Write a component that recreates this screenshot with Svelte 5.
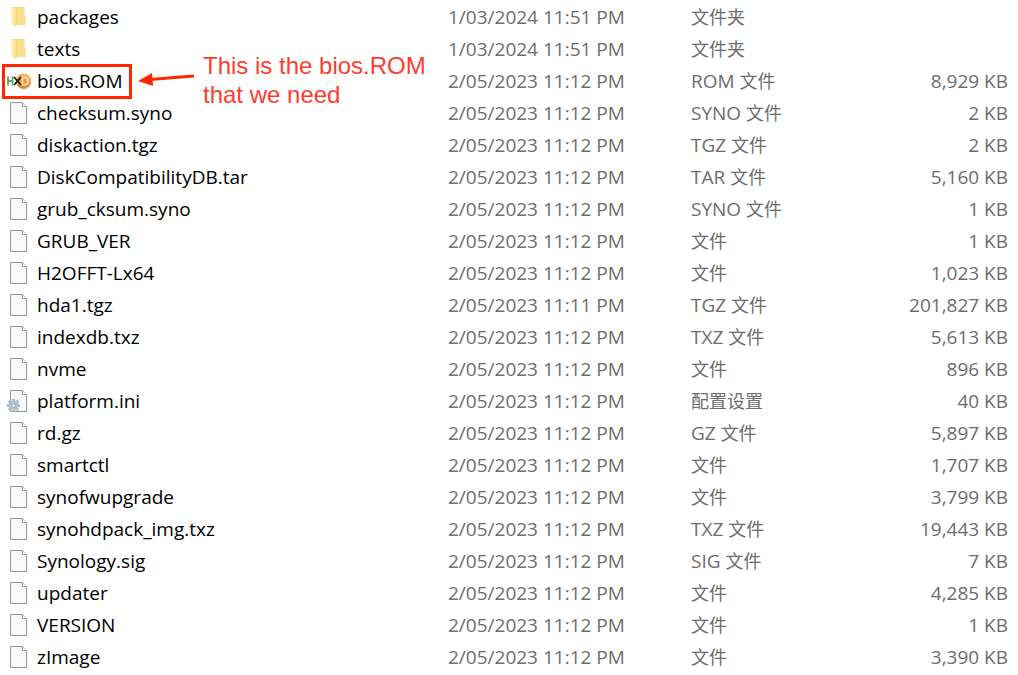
<script>
  const files = [
    ['folder', 'packages', '1/03/2024 11:51 PM', '', '文件夹', ''],
    ['folder', 'texts', '1/03/2024 11:51 PM', '', '文件夹', ''],
    ['hxd', 'bios.ROM', '2/05/2023 11:12 PM', 'ROM', '文件', '8,929 KB'],
    ['file', 'checksum.syno', '2/05/2023 11:12 PM', 'SYNO', '文件', '2 KB'],
    ['file', 'diskaction.tgz', '2/05/2023 11:12 PM', 'TGZ', '文件', '2 KB'],
    ['file', 'DiskCompatibilityDB.tar', '2/05/2023 11:12 PM', 'TAR', '文件', '5,160 KB'],
    ['file', 'grub_cksum.syno', '2/05/2023 11:12 PM', 'SYNO', '文件', '1 KB'],
    ['file', 'GRUB_VER', '2/05/2023 11:12 PM', '', '文件', '1 KB'],
    ['file', 'H2OFFT-Lx64', '2/05/2023 11:12 PM', '', '文件', '1,023 KB'],
    ['file', 'hda1.tgz', '2/05/2023 11:11 PM', 'TGZ', '文件', '201,827 KB'],
    ['file', 'indexdb.txz', '2/05/2023 11:12 PM', 'TXZ', '文件', '5,613 KB'],
    ['file', 'nvme', '2/05/2023 11:12 PM', '', '文件', '896 KB'],
    ['config', 'platform.ini', '2/05/2023 11:12 PM', '', '配置设置', '40 KB'],
    ['file', 'rd.gz', '2/05/2023 11:12 PM', 'GZ', '文件', '5,897 KB'],
    ['file', 'smartctl', '2/05/2023 11:12 PM', '', '文件', '1,707 KB'],
    ['file', 'synofwupgrade', '2/05/2023 11:12 PM', '', '文件', '3,799 KB'],
    ['file', 'synohdpack_img.txz', '2/05/2023 11:12 PM', 'TXZ', '文件', '19,443 KB'],
    ['file', 'Synology.sig', '2/05/2023 11:12 PM', 'SIG', '文件', '7 KB'],
    ['file', 'updater', '2/05/2023 11:12 PM', '', '文件', '4,285 KB'],
    ['file', 'VERSION', '2/05/2023 11:12 PM', '', '文件', '1 KB'],
    ['file', 'zImage', '2/05/2023 11:12 PM', '', '文件', '3,390 KB']
  ].map(([icon, name, date, ext, kind, size]) => ({ icon, name, date, ext, kind, size }));
  const teeth = [0, 45, 90, 135, 180, 225, 270, 315];
</script>

{#snippet glyph(kind)}
  <svg class="icon" viewBox="0 0 26 26" aria-hidden="true">
    {#if kind === 'folder'}
      <path d="M6 3h12.500v9h1v9H6z" fill="#f7d77c" />
      <path d="M8 4h10v8h1v9H8z" fill="#fbdf8c" />
      <path d="M5.500 3l4.500 3v17l-4.500-2z" fill="#ffe9a6" />
      <path d="M10 6v16.500" stroke="#efcb6b" stroke-width=".8" />
    {:else if kind === 'hxd'}
      <defs>
        <linearGradient id="orb" x1="0" y1="0" x2="0" y2="1">
          <stop offset="0" stop-color="#f9b55f" />
          <stop offset="1" stop-color="#dc8424" />
        </linearGradient>
      </defs>
      <ellipse cx="17.500" cy="14" rx="7.500" ry="7.500" fill="#cfc6bb" />
      <ellipse cx="17.500" cy="13" rx="7.500" ry="7.500" fill="url(#orb)" />
      <path d="M16.500 9.200h1.800c5 0 5 7.600 0 7.600h-1.800z" stroke="#fbe3c2" stroke-width="1.600" fill="none" />
      <path d="M2 8.500v9M6.500 8.500v9M2 13h4.500" stroke="#4fae68" stroke-width="1.800" fill="none" />
      <path d="M8 9l7 8M15 9l-7 8" stroke="#151515" stroke-width="1.700" />
    {:else}
      <path d="M4.500 2.500h12l4 4v17h-16z" fill="#f7f9fa" stroke="#979797" />
      <path d="M16.500 2.500v4h4" fill="#fff" stroke="#979797" />
      {#if kind === 'config'}
        <g fill="#a9b9c6">
          {#each teeth as angle}
            <rect x="6" y="11" width="3" height="4" transform="rotate({angle} 7.5 17.5)" />
          {/each}
        </g>
        <circle cx="7.500" cy="17.500" r="3.500" fill="#fff" stroke="#b3c3d0" stroke-width="3" />
        <circle cx="7.500" cy="17.500" r="2" fill="#f7fafc" stroke="#8496a5" stroke-width=".8" />
      {/if}
    {/if}
  </svg>
{/snippet}

<main>
  <table aria-label="Files">
    <colgroup><col class="name-col" /><col class="date-col" /><col class="type-col" /><col /></colgroup>
    <tbody>
      {#each files as file}
        <tr>
          <td>
            <div class="name">
              {@render glyph(file.icon)}
              <span>{file.name}</span>
              {#if file.name === 'bios.ROM'}
                <div class="frame"></div>
                <div class="callout">
                  <svg viewBox="0 0 60 20" aria-hidden="true">
                    <path d="M58 6L14 9.500" stroke="#ff2600" stroke-width="3" />
                    <path d="M2 11L16 3l1 13z" fill="#ff2600" />
                  </svg>
                  <p>This is the bios.ROM<br />that we need</p>
                </div>
              {/if}
            </div>
          </td>
          <td class="meta">{file.date}</td>
          <td class="meta">{#if file.ext}{file.ext}&nbsp;{/if}<span class="cjk">{file.kind}</span></td>
          <td class="meta size">{file.size}</td>
        </tr>
      {/each}
    </tbody>
  </table>
</main>

<style>
  :global(body) {
    margin: 0;
    background: #fff;
  }
  main {
    padding: 1px 10px 2px 6px;
    font: 19px/32px "Open Sans", "Noto Sans CJK SC", sans-serif;
    color: #000;
  }
  table {
    width: 100%;
    table-layout: fixed;
    border-collapse: collapse;
  }
  .name-col {
    width: 442px;
  }
  .date-col {
    width: 243px;
  }
  .type-col {
    width: 180px;
  }
  td {
    height: 32px;
    padding: 0;
    white-space: nowrap;
  }
  .name {
    position: relative;
    display: flex;
    align-items: center;
    gap: 5px;
    height: 32px;
  }
  .icon {
    flex: none;
    width: 26px;
    height: 26px;
  }
  .meta {
    color: #6d6d6d;
  }
  .cjk {
    font-family: "Noto Sans CJK SC", sans-serif;
    font-size: 18px;
    line-height: 1;
  }
  .size {
    text-align: right;
  }
  .frame {
    position: absolute;
    left: -4px;
    top: -1px;
    box-sizing: border-box;
    width: 130px;
    height: 35px;
    border: 3px solid #ff2600;
  }
  .callout {
    position: absolute;
    left: 130px;
    top: -14px;
    display: flex;
    align-items: center;
    gap: 7px;
  }
  .callout svg {
    width: 60px;
    height: 20px;
  }
  .callout p {
    margin: 0;
    font: 24px/29px "Liberation Sans", Arial, sans-serif;
    color: #ff3b30;
  }
</style>
